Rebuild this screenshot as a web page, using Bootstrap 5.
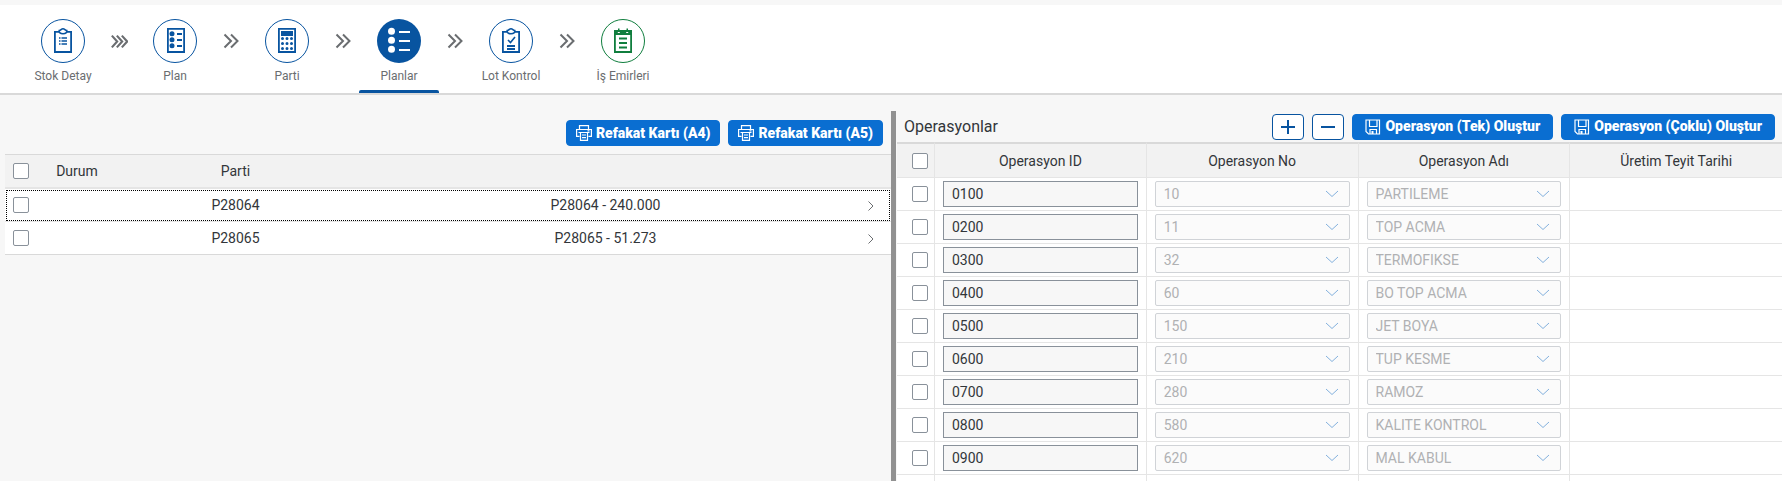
<!DOCTYPE html>
<html lang="tr">
<head>
<meta charset="utf-8">
<meta name="viewport" content="width=device-width, initial-scale=1">
<title>Planlar</title>
<link href="https://cdn.jsdelivr.net/npm/bootstrap@5.3.0/dist/css/bootstrap.min.css" rel="stylesheet">
<style>
  body { font-family: Roboto, "Noto Sans", sans-serif; font-size: 14px; line-height: 20px; color: #32363a; background: #f7f7f7; }
  .steps { background: #fff; border-bottom: 2px solid #d9d9d9; margin-top: 5px; padding-left: 23px; }
  .step { width: 80px; height: 88px; padding-top: 14px; color: #6a6d70; font-size: 12px; border-bottom: 3px solid transparent; }
  .step.active { border-bottom: 0; }
  .step.active::after { content: ""; width: 100%; height: 3px; margin-top: auto; background: #0854a0; border-radius: 2px 2px 0 0; }
  .step-label { line-height: 16px; margin-top: 5px; }
  .step-ico { width: 44px; height: 44px; color: #0854a0; }
  .step-ico.done { color: #107e3e; }
  .step-sep { width: 32px; height: 72px; color: #6a6d70; }
  .btn-emph { --bs-btn-color: #fff; --bs-btn-bg: #0a6ed1; --bs-btn-border-color: #0a6ed1; --bs-btn-hover-bg: #085caf; --bs-btn-hover-color: #fff; --bs-btn-padding-y: 0; --bs-btn-padding-x: 9px; --bs-btn-font-size: 14px; --bs-btn-font-weight: 900; --bs-btn-border-radius: 4px; height: 26px; }
  .btn-wide { --bs-btn-padding-x: 12px; }
  .btn-tool { --bs-btn-color: #0854a0; --bs-btn-bg: #fff; --bs-btn-border-color: #0854a0; --bs-btn-hover-bg: #ebf5fe; --bs-btn-hover-color: #0854a0; --bs-btn-hover-border-color: #0854a0; --bs-btn-border-radius: 4px; width: 32px; height: 26px; }
  .pane-left { padding: 25px 0 0 5px; }
  .tools-left { padding: 0 8px 8px 0; }
  .splitter { width: 5px; background: #919191; margin-top: 16px; }
  .pane-right { padding: 16px 0 0 1px; min-width: 0; }
  .tools-right { height: 31px; padding: 0 7px; }
  .pane-title { font-size: 16px; font-weight: 400; }
  .grid { --bs-table-bg: transparent; table-layout: fixed; width: 100%; color: #32363a; border-collapse: separate; border-spacing: 0; }
  .grid > :not(caption) > * > * { padding: 0; height: 33px; border: 0 solid #e5e5e5; border-bottom-width: 1px; background: #fff; text-align: center; vertical-align: middle; font-weight: 400; color: inherit; }
  .grid > thead > tr > th { background: #f2f2f2; }
  .plans > thead > tr > th { height: 35px; border-top: 1px solid #d9d9d9; border-bottom: 2px solid #e5e5e5; }
  .plans > tbody > tr > td { padding-bottom: 1px; }
  .plans > tbody > tr:last-child > td { border-bottom-color: #d9d9d9; }
  .plans > tbody > tr.focused { outline: 1px dotted #000; outline-offset: -2px; }
  .plans > :not(caption) > * > .c-check { width: 42px; padding-left: 8px; text-align: left; }
  .plans .c-state { width: 60px; }
  .plans .c-lot { width: 29%; }
  .plans > :not(caption) > * > .c-nav { width: 44px; padding-left: 4px; color: #6a6d70; }
  .ops > thead > tr > th { height: 36px; border-top: 2px solid #d9d9d9; }
  .ops > :not(caption) > * > :not(:last-child) { border-right-width: 1px; }
  .ops > tbody > tr > td { padding: 0 8px; }
  .ops > :not(caption) > * > .c-check { width: 38px; padding: 0 0 0 8px; }
  .grid .form-check-input { float: none; display: block; width: 16px; height: 16px; margin: 0; border: 1px solid #89919a; border-radius: 2px; background-color: #fff; }
  .ops .form-check-input { margin: 0 auto; }
  .grid .form-control, .grid .form-select { height: 26px; min-height: 0; padding: 0 8px; font-size: 14px; line-height: 20px; border-radius: 0; }
  .grid .form-control { color: #32363a; background: #f7f7f7; border-color: #89919a; }
  .grid .form-select { color: #b0b1b3; opacity: 1; border-color: #d0d3d7; border-radius: 2px; background-color: #fbfbfb; background-size: 14px 8px; background-position: right 10px center; background-image: url("data:image/svg+xml,%3csvg xmlns='http://www.w3.org/2000/svg' viewBox='0 0 14 8'%3e%3cpath fill='none' stroke='%2383b0dd' d='M1 1l6 5.5L13 1'/%3e%3c/svg%3e"); }
</style>
</head>
<body class="vh-100 overflow-hidden d-flex flex-column">

<svg class="d-none" aria-hidden="true">
  <symbol id="i-print" viewBox="0 0 16 16"><g fill="none" stroke="currentColor" stroke-width="1.2"><path d="M3.500 4.500V.6h9v3.900M3.500 11.400H.6V4.500h14.800v6.900h-2.900M2.500 7.500h11M4.500 7.500v7.900h7V7.500M6 10h4M6 12.600h4M11.500 5.900h2"/></g></symbol>
  <symbol id="i-save" viewBox="0 0 16 16"><g fill="none" stroke="currentColor" stroke-width="1.2"><path d="M1 1h13.500v14H3.500L1 12.500zM4.500 1v6.500h7.500V1M5 15v-4.500h6.500V15"/><path stroke-width="2" d="M7.500 12v3"/></g></symbol>
  <symbol id="i-right" viewBox="0 0 16 16"><path fill="none" stroke="currentColor" d="M5.500 3.500 10 8l-4.500 4.500"/></symbol>
  <symbol id="i-double" viewBox="0 0 16 16"><path fill="none" stroke="currentColor" stroke-width="2" d="M1.500 1.500 8 8l-6.500 6.500M8 1.500 14.500 8 8 14.500"/></symbol>
  <symbol id="i-triple" viewBox="0 0 16 16"><path fill="none" stroke="currentColor" stroke-width="2" d="M.8 2.500 5.800 8 .8 13.500M5.500 2.500l5 5.500-5 5.500M10.200 2.500l5 5.500-5 5.500"/></symbol>
</svg>

<nav class="steps flex-shrink-0" aria-label="Adımlar">
  <ul class="list-unstyled d-flex mb-0">
    <li><a href="#" class="step d-flex flex-column align-items-center text-decoration-none">
      <svg class="step-ico" viewBox="0 0 44 44" fill="none" stroke="currentColor"><circle cx="22" cy="22" r="21.500"/><path stroke-width="1.800" d="M18 12.900h-4.100v20.300h16.200V12.900H26"/><path stroke-width="2" d="M13 33h18"/><path stroke-width="1.600" d="M18.200 11.500c1.800 0 2-1.800 3.800-1.800s2 1.800 3.800 1.800c.3 2-1 3.300-3.800 3.300s-4.100-1.300-3.800-3.300z"/><path stroke-width="1.600" d="M18 19h1.500M18 22h1.500M18 25h1.500M20.500 19H26M20.500 22H26M20.500 25H26"/></svg>
      <span class="step-label">Stok Detay</span></a></li>
    <li class="step-sep d-flex align-items-center justify-content-center"><svg width="17" height="17"><use href="#i-triple"/></svg></li>
    <li><a href="#" class="step d-flex flex-column align-items-center text-decoration-none">
      <svg class="step-ico" viewBox="0 0 44 44" fill="none" stroke="currentColor"><circle cx="22" cy="22" r="21.500"/><path stroke-width="1.800" d="M14.900 9.900h16.200v23.300H14.900z"/><path stroke-width="2" d="M14 33h18M24 15h5M24 21h5M24 27h5"/><g fill="currentColor" stroke="none"><circle cx="19" cy="14.700" r="2.500"/><circle cx="19" cy="20.700" r="2.500"/><circle cx="19" cy="26.700" r="2.500"/></g></svg>
      <span class="step-label">Plan</span></a></li>
    <li class="step-sep d-flex align-items-center justify-content-center"><svg width="16" height="16"><use href="#i-double"/></svg></li>
    <li><a href="#" class="step d-flex flex-column align-items-center text-decoration-none">
      <svg class="step-ico" viewBox="0 0 44 44" fill="none" stroke="currentColor"><circle cx="22" cy="22" r="21.500"/><path stroke-width="1.800" d="M13.900 9.900h16.200v23.300H13.900z"/><path stroke-width="2" d="M13 33h18"/><path fill="currentColor" stroke="none" d="M16 12h12v5H16z"/><path stroke-width="3" stroke-linecap="round" d="M17.500 19.500h0M22 19.500h0M26.500 19.500h0M17.500 24.500h0M22 24.500h0M26.500 24.500h0M17.500 29.500h0M22 29.500h0M26.500 29.500h0"/></svg>
      <span class="step-label">Parti</span></a></li>
    <li class="step-sep d-flex align-items-center justify-content-center"><svg width="16" height="16"><use href="#i-double"/></svg></li>
    <li><a href="#" class="step active d-flex flex-column align-items-center text-decoration-none" aria-current="step">
      <svg class="step-ico" viewBox="0 0 44 44"><circle cx="22" cy="22" r="22" fill="currentColor"/><g fill="#fff"><circle cx="14.500" cy="12.300" r="3.500"/><circle cx="14.500" cy="21.300" r="3.500"/><circle cx="14.500" cy="30.300" r="3.500"/><path d="M22 12h11v2H22zM22 21h11v2H22zM22 30h11v2H22z"/></g></svg>
      <span class="step-label">Planlar</span></a></li>
    <li class="step-sep d-flex align-items-center justify-content-center"><svg width="16" height="16"><use href="#i-double"/></svg></li>
    <li><a href="#" class="step d-flex flex-column align-items-center text-decoration-none">
      <svg class="step-ico" viewBox="0 0 44 44" fill="none" stroke="currentColor"><circle cx="22" cy="22" r="21.500"/><path stroke-width="1.800" d="M18 12.900h-4.100v20.300h16.200V12.900H26"/><path stroke-width="2" d="M13 33h18M18 27h8M18 30h8"/><path stroke-width="1.600" d="M18.200 11.500c1.800 0 2-1.800 3.800-1.800s2 1.800 3.800 1.800c.3 2-1 3.300-3.800 3.300s-4.100-1.300-3.800-3.300zM19 21l2.500 2.500 4.500-5.500"/></svg>
      <span class="step-label">Lot Kontrol</span></a></li>
    <li class="step-sep d-flex align-items-center justify-content-center"><svg width="16" height="16"><use href="#i-double"/></svg></li>
    <li><a href="#" class="step d-flex flex-column align-items-center text-decoration-none">
      <svg class="step-ico done" viewBox="0 0 44 44" fill="none" stroke="currentColor"><circle cx="22" cy="22" r="21.500"/><path stroke-width="1.800" d="M13.900 12v21h16.200V12"/><path fill="currentColor" stroke="none" d="M13 11h4V9.500h1.500V11h7V9.500H27V11h4v5H13z"/><path stroke-width="2" d="M13 33h18M18 19.500h8M18 24h8M18 28.500h8"/><path stroke="#fff" stroke-width="1.200" d="M16.800 13.500h2M25.200 13.500h2"/></svg>
      <span class="step-label">İş Emirleri</span></a></li>
  </ul>
</nav>

<main class="d-flex flex-grow-1 overflow-hidden">
  <section class="pane-left col-6 flex-shrink-0" aria-label="Planlar">
    <div class="tools-left d-flex justify-content-end gap-2">
      <button type="button" class="btn btn-emph d-flex align-items-center gap-1"><svg width="16" height="16"><use href="#i-print"/></svg>Refakat Kartı (A4)</button>
      <button type="button" class="btn btn-emph d-flex align-items-center gap-1"><svg width="16" height="16"><use href="#i-print"/></svg>Refakat Kartı (A5)</button>
    </div>
    <table class="table grid plans mb-0">
      <thead><tr><th class="c-check"><input class="form-check-input" type="checkbox" aria-label="Tümünü seç"></th><th class="c-state">Durum</th><th class="c-lot">Parti</th><th></th><th class="c-nav"></th></tr></thead>
      <tbody>
        <tr class="focused"><td class="c-check"><input class="form-check-input" type="checkbox" aria-label="P28064"></td><td></td><td>P28064</td><td>P28064 - 240.000</td><td class="c-nav"><svg width="16" height="16"><use href="#i-right"/></svg></td></tr>
        <tr><td class="c-check"><input class="form-check-input" type="checkbox" aria-label="P28065"></td><td></td><td>P28065</td><td>P28065 - 51.273</td><td class="c-nav"><svg width="16" height="16"><use href="#i-right"/></svg></td></tr>
      </tbody>
    </table>
  </section>

  <div class="splitter flex-shrink-0" role="separator" aria-orientation="vertical"></div>

  <section class="pane-right flex-fill" aria-label="Operasyonlar">
    <div class="tools-right d-flex align-items-center gap-2">
      <h1 class="pane-title mb-0 me-auto">Operasyonlar</h1>
      <button type="button" class="btn btn-tool d-flex align-items-center justify-content-center p-0" aria-label="Ekle"><svg width="16" height="16" stroke="currentColor" stroke-width="2"><path d="M1 8h14M8 1v14"/></svg></button>
      <button type="button" class="btn btn-tool d-flex align-items-center justify-content-center p-0" aria-label="Sil"><svg width="16" height="16" stroke="currentColor" stroke-width="2"><path d="M1 8h14"/></svg></button>
      <button type="button" class="btn btn-emph btn-wide d-flex align-items-center gap-1"><svg width="16" height="16"><use href="#i-save"/></svg>Operasyon (Tek) Oluştur</button>
      <button type="button" class="btn btn-emph btn-wide d-flex align-items-center gap-1"><svg width="16" height="16"><use href="#i-save"/></svg>Operasyon (Çoklu) Oluştur</button>
    </div>
    <table class="table grid ops mb-0">
      <thead><tr><th class="c-check"><input class="form-check-input" type="checkbox" aria-label="Tümünü seç"></th><th>Operasyon ID</th><th>Operasyon No</th><th>Operasyon Adı</th><th>Üretim Teyit Tarihi</th></tr></thead>
      <tbody>
        <tr><td class="c-check"><input class="form-check-input" type="checkbox" aria-label="Seç 0100"></td><td><input class="form-control" type="text" value="0100" aria-label="Operasyon ID"></td><td><select class="form-select" disabled aria-label="Operasyon No"><option>10</option></select></td><td><select class="form-select" disabled aria-label="Operasyon Adı"><option>PARTILEME</option></select></td><td></td></tr>
        <tr><td class="c-check"><input class="form-check-input" type="checkbox" aria-label="Seç 0200"></td><td><input class="form-control" type="text" value="0200" aria-label="Operasyon ID"></td><td><select class="form-select" disabled aria-label="Operasyon No"><option>11</option></select></td><td><select class="form-select" disabled aria-label="Operasyon Adı"><option>TOP ACMA</option></select></td><td></td></tr>
        <tr><td class="c-check"><input class="form-check-input" type="checkbox" aria-label="Seç 0300"></td><td><input class="form-control" type="text" value="0300" aria-label="Operasyon ID"></td><td><select class="form-select" disabled aria-label="Operasyon No"><option>32</option></select></td><td><select class="form-select" disabled aria-label="Operasyon Adı"><option>TERMOFIKSE</option></select></td><td></td></tr>
        <tr><td class="c-check"><input class="form-check-input" type="checkbox" aria-label="Seç 0400"></td><td><input class="form-control" type="text" value="0400" aria-label="Operasyon ID"></td><td><select class="form-select" disabled aria-label="Operasyon No"><option>60</option></select></td><td><select class="form-select" disabled aria-label="Operasyon Adı"><option>BO TOP ACMA</option></select></td><td></td></tr>
        <tr><td class="c-check"><input class="form-check-input" type="checkbox" aria-label="Seç 0500"></td><td><input class="form-control" type="text" value="0500" aria-label="Operasyon ID"></td><td><select class="form-select" disabled aria-label="Operasyon No"><option>150</option></select></td><td><select class="form-select" disabled aria-label="Operasyon Adı"><option>JET BOYA</option></select></td><td></td></tr>
        <tr><td class="c-check"><input class="form-check-input" type="checkbox" aria-label="Seç 0600"></td><td><input class="form-control" type="text" value="0600" aria-label="Operasyon ID"></td><td><select class="form-select" disabled aria-label="Operasyon No"><option>210</option></select></td><td><select class="form-select" disabled aria-label="Operasyon Adı"><option>TUP KESME</option></select></td><td></td></tr>
        <tr><td class="c-check"><input class="form-check-input" type="checkbox" aria-label="Seç 0700"></td><td><input class="form-control" type="text" value="0700" aria-label="Operasyon ID"></td><td><select class="form-select" disabled aria-label="Operasyon No"><option>280</option></select></td><td><select class="form-select" disabled aria-label="Operasyon Adı"><option>RAMOZ</option></select></td><td></td></tr>
        <tr><td class="c-check"><input class="form-check-input" type="checkbox" aria-label="Seç 0800"></td><td><input class="form-control" type="text" value="0800" aria-label="Operasyon ID"></td><td><select class="form-select" disabled aria-label="Operasyon No"><option>580</option></select></td><td><select class="form-select" disabled aria-label="Operasyon Adı"><option>KALITE KONTROL</option></select></td><td></td></tr>
        <tr><td class="c-check"><input class="form-check-input" type="checkbox" aria-label="Seç 0900"></td><td><input class="form-control" type="text" value="0900" aria-label="Operasyon ID"></td><td><select class="form-select" disabled aria-label="Operasyon No"><option>620</option></select></td><td><select class="form-select" disabled aria-label="Operasyon Adı"><option>MAL KABUL</option></select></td><td></td></tr>
        <tr><td class="c-check"></td><td></td><td></td><td></td><td></td></tr>
      </tbody>
    </table>
  </section>
</main>

<script src="https://cdn.jsdelivr.net/npm/bootstrap@5.3.0/dist/js/bootstrap.bundle.min.js"></script>
</body>
</html>
